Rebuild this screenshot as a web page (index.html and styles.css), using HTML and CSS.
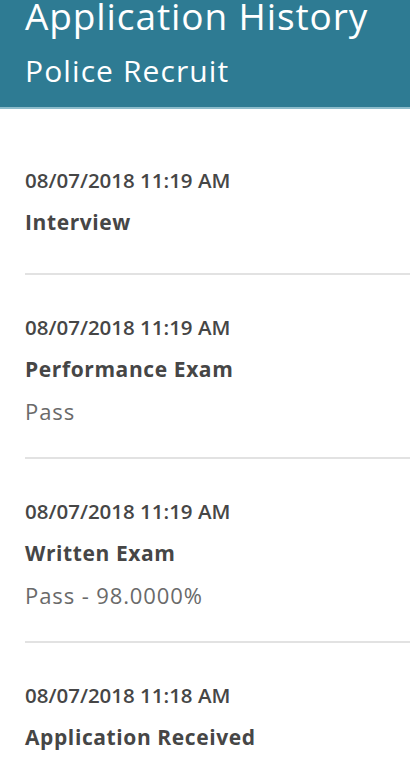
FILE: index.html
```html
<!DOCTYPE html>
<html lang="en">
<head>
    <meta charset="UTF-8">
    <meta name="viewport" content="width=device-width, initial-scale=1.0">
    <title>Application History</title>
    <link rel="stylesheet" href="styles.css">
</head>
<body>

    <div id="header">
        <h1 id="page-title">Application History</h1>
        <h2 id="page-subtitle">Police Recruit</h2>
    </div>

    <div id="history">
        <div class="entry no-result">
            <div class="entry-date">08/07/2018 11:19 AM</div>
            <div class="entry-step">Interview</div>
        </div>
        <div class="entry">
            <div class="entry-date">08/07/2018 11:19 AM</div>
            <div class="entry-step">Performance Exam</div>
            <div class="entry-result">Pass</div>
        </div>
        <div class="entry">
            <div class="entry-date">08/07/2018 11:19 AM</div>
            <div class="entry-step">Written Exam</div>
            <div class="entry-result">Pass - 98.0000%</div>
        </div>
        <div class="entry">
            <div class="entry-date">08/07/2018 11:18 AM</div>
            <div class="entry-step">Application Received</div>
        </div>
    </div>

</body>
</html>
```

FILE: styles.css
```css
body {
    font-family: "Open Sans", Arial, sans-serif;
    background-color: #ffffff;
    color: #464646;
    margin: 0;
    padding: 0;
}

#header {
    height: 107px;
    padding-left: 25px;
    background-color: #2e7b93;
    border-bottom: 2px solid #8dbccb;
    color: #ffffff;
    overflow: hidden;
}

#page-title {
    margin: 0;
    font-size: 37px;
    font-weight: normal;
    letter-spacing: 0.9px;
    line-height: 32px;
}

#page-subtitle {
    margin: 0;
    margin-top: 19px;
    font-size: 30px;
    font-weight: normal;
    letter-spacing: 1.1px;
    line-height: 40px;
}

#history {
    margin-left: 25px;
    padding-top: 19px;
}

.entry {
    padding: 31px 0 25px 0;
    border-bottom: 2px solid #e2e2e2;
    line-height: 42px;
}

.entry.no-result {
    padding-bottom: 30px;
}

.entry:last-child {
    border-bottom: none;
}

.entry-date {
    font-size: 20.5px;
    font-weight: 600;
}

.entry-step {
    font-size: 21px;
    font-weight: 700;
    letter-spacing: 0.6px;
}

.entry-result {
    font-size: 22px;
    letter-spacing: 0.9px;
    color: #6a6a6a;
}
```
